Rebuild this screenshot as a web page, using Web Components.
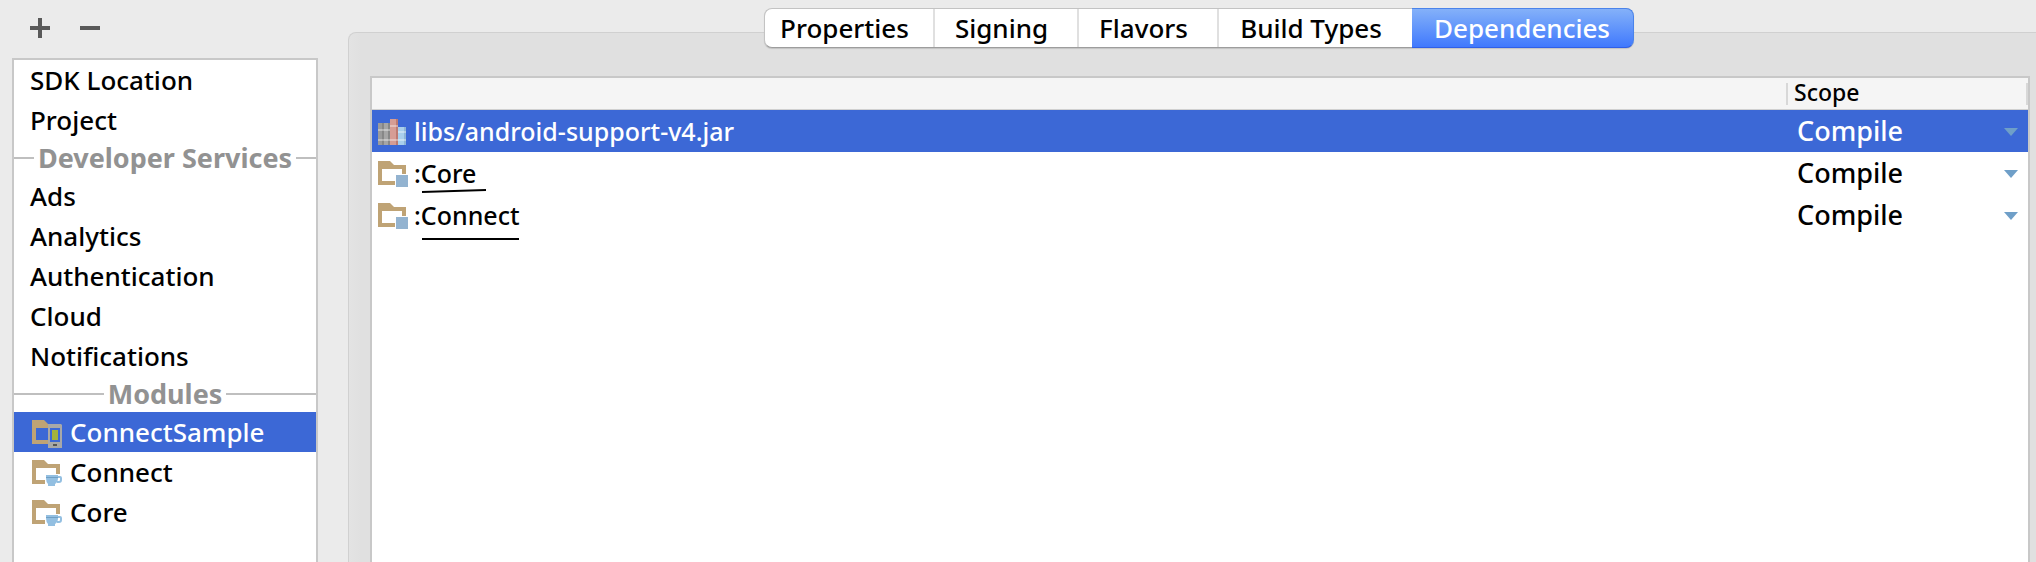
<!DOCTYPE html>
<html lang="en">
<head>
<meta charset="utf-8">
<meta name="viewport" content="width=device-width, initial-scale=1">
<title>Project Structure</title>
<style>
  body { margin: 0; font: 500 26px/40px "Noto Sans", "Open Sans", sans-serif; color: #000; background: #ebebeb; }
</style>
</head>
<body>
<project-structure>
  <module-toolbar slot="toolbar"></module-toolbar>
  <section-list slot="list">
    <list-item>SDK Location</list-item>
    <list-item>Project</list-item>
    <list-heading>Developer Services</list-heading>
    <list-item>Ads</list-item>
    <list-item>Analytics</list-item>
    <list-item>Authentication</list-item>
    <list-item>Cloud</list-item>
    <list-item>Notifications</list-item>
    <list-heading>Modules</list-heading>
    <list-item selected><folder-icon slot="icon" kind="phone"></folder-icon>ConnectSample</list-item>
    <list-item><folder-icon slot="icon" kind="cup"></folder-icon>Connect</list-item>
    <list-item><folder-icon slot="icon" kind="cup"></folder-icon>Core</list-item>
  </section-list>
  <tab-strip slot="tabs"></tab-strip>
  <dependency-table slot="content"></dependency-table>
</project-structure>

<script>
class ShadowElement extends HTMLElement {
  constructor() {
    super();
    this.attachShadow({ mode: 'open' });
  }
  connectedCallback() {
    this.shadowRoot.innerHTML = this.render();
  }
}

customElements.define('project-structure', class extends ShadowElement {
  render() {
    return `
      <style>
        :host { display: flex; min-height: 100vh; overflow: hidden; }
        aside { flex: none; width: 306px; margin: 0 30px 0 12px; display: flex; flex-direction: column; }
        .list { flex: 1; display: flex; }
        main { flex: 1; min-width: 0; margin-right: -13px; display: flex; flex-direction: column; position: relative; padding-top: 8px; }
        .tabs { display: flex; justify-content: center; position: relative; z-index: 1; margin-bottom: -16px; }
        .panel { flex: 1; display: flex; border: 1px solid #d0d0d0; border-bottom: 0; border-radius: 8px 8px 0 0; padding: 43px 18px 0 21px;
          background: linear-gradient(90deg, #e3e3e3, #e0e0e0 12px); }
      </style>
      <aside>
        <slot name="toolbar"></slot>
        <div class="list"><slot name="list"></slot></div>
      </aside>
      <main>
        <div class="tabs"><slot name="tabs"></slot></div>
        <div class="panel"><slot name="content"></slot></div>
      </main>`;
  }
});

customElements.define('module-toolbar', class extends ShadowElement {
  render() {
    return `
      <style>
        :host { display: flex; gap: 30px; padding: 18px; height: 22px; }
        button { border: 0; padding: 0; background: none; width: 20px; height: 20px; }
        svg { display: block; }
      </style>
      <button type="button" aria-label="Add module"><svg width="20" height="20" fill="#595959"><path d="M8 0h4v8h8v4h-8v8H8v-8H0V8h8z"/></svg></button>
      <button type="button" aria-label="Remove module"><svg width="20" height="20" fill="#595959"><path d="M0 8h20v4H0z"/></svg></button>`;
  }
});

customElements.define('section-list', class extends ShadowElement {
  render() {
    return `
      <style>
        :host { display: block; flex: 1; background: #fff; border: 2px solid #c8c8c8; border-bottom: 0; }
      </style>
      <nav aria-label="Sections"><slot></slot></nav>`;
  }
});

customElements.define('list-item', class extends ShadowElement {
  render() {
    return `
      <style>
        :host { display: block; }
        a { display: flex; align-items: center; gap: 8px; height: 40px; padding-left: 16px; color: inherit; text-decoration: none; white-space: nowrap; }
        :host([selected]) { background: #3c68d6; color: #fff; }
        ::slotted(folder-icon) { margin: 4px 0 0 2px; }
      </style>
      <a href="#"><slot name="icon"></slot><span><slot></slot></span></a>`;
  }
});

customElements.define('list-heading', class extends ShadowElement {
  render() {
    return `
      <style>
        :host { display: flex; align-items: center; gap: 4px; height: 36px; font-size: 27px; line-height: 36px; font-weight: bold; color: #929292; white-space: nowrap; }
        :host::before, :host::after { content: ""; flex: 1; height: 2px; background: #bfbfbf; }
      </style>
      <slot></slot>`;
  }
});

const FOLDER = '<path d="M0 0h12l4 4h12v20H0zM4 8v12h20V8z" fill="#bfa375" fill-rule="evenodd"/>';
const ICONS = {
  phone: FOLDER + `
    <path d="M16 4h13l1 1v23H16z" fill="#a8a8a8"/><path d="M18 8h10v14H18z" fill="#3c68d6"/>
    <path d="M20 10h6v10h-6z" fill="#a3b23c"/><path d="M21 24h4v2h-4z" fill="#555"/>`,
  cup: FOLDER + `
    <path d="M13 14h15v10h-15z" fill="#fff"/><path d="M14 15h12v3q0 4-3 6v2h-7v-2q-2-2-2-6z" fill="#93bfe1"/>
    <path d="M14 17h12v1H14z" fill="#6f9fc4"/><path d="M26 17h2q1 0 1 1v2q0 2-2 2h-2" fill="none" stroke="#93bfe1" stroke-width="2"/>`,
  module: FOLDER + `
    <path d="M17 13h11v11H17z" fill="#fff"/><path d="M18 14h12v12H18z" fill="#93b3d0"/>`,
  library: `
    <path d="M0 4h6v22H0z" fill="#9b9b9b"/><path d="M6 4h6v22H6z" fill="#a6a6a6"/>
    <path d="M4 4h2v22H4zM10 4h2v22h-2z" fill="#878787"/><path d="M12 0h8v26h-8z" fill="#d69d95"/>
    <path d="M18 0h2v26h-2z" fill="#bd7a72"/><path d="M20 8h8v18h-8z" fill="#a9cfec"/><path d="M26 8h2v18h-2z" fill="#8fb5d5"/>
    <path d="M0 10h12v2H0zM0 20h12v2H0zM12 6h8v2h-8zM12 20h8v2h-8zM20 12h8v2h-8zM20 20h8v2h-8z" fill="#fff" opacity=".35"/>`
};

customElements.define('folder-icon', class extends ShadowElement {
  render() {
    return `
      <style>:host { display: block; flex: none; } svg { display: block; }</style>
      <svg width="30" height="28" aria-hidden="true">${ICONS[this.getAttribute('kind')]}</svg>`;
  }
});

customElements.define('tab-strip', class extends ShadowElement {
  render() {
    const tabs = ['Properties', 'Signing', 'Flavors', 'Build Types', 'Dependencies'];
    return `
      <style>
        :host { display: block; }
        div { display: grid; grid-template-columns: 170px 144px 140px 193px 222px; height: 38px; border: solid #c3c3c3; border-width: 1px 0 1px 1px; border-bottom-color: #9d9d9d; border-radius: 8px;
          background: #fff; box-shadow: 0 1px 1px #0002; }
        button { font: inherit; line-height: 36px; color: inherit; background: none; border: 0; border-right: 2px solid #e0e0e0; padding: 0 8px 0 0; white-space: nowrap; }
        button:nth-child(4) { border-right: 0; }
        button[aria-selected=true] { margin: -1px 0; padding: 0; border: 1px solid #4a83ea; border-width: 1px 1px 1px 0; border-bottom-color: #2f5fe8; border-radius: 0 8px 8px 0; color: #fff;
          background: linear-gradient(#84b1f9, #4079fd); }
      </style>
      <div role="tablist">${tabs.map((t, i) => `<button type="button" role="tab" aria-selected="${i === 4}">${t}</button>`).join('')}</div>`;
  }
});

customElements.define('scope-select', class extends ShadowElement {
  render() {
    return `
      <style>
        :host { display: grid; align-items: center; font-size: 27px; }
        select, svg { grid-area: 1 / 1; }
        select { appearance: none; width: 100%; height: 40px; border: 0; margin: 0; padding: 0 0 0 11px; background: none; font: inherit; color: inherit; }
        svg { justify-self: end; margin: 2px 10px 0 0; pointer-events: none; }
      </style>
      <select aria-label="Scope of ${this.getAttribute('for-name')}"><option>Compile</option></select>
      <svg width="14" height="8" aria-hidden="true"><path d="M0 0h14L7 8z" fill="#6f9fc8"/></svg>`;
  }
});

customElements.define('dependency-table', class extends ShadowElement {
  render() {
    const rows = [
      { name: 'libs/android-support-v4.jar', icon: 'library', selected: true },
      { name: ':Core', icon: 'module', mark: '<svg class="mark" width="64" height="4"><path d="M0 3 64 1" stroke="#000" stroke-width="2"/></svg>' },
      { name: ':Connect', icon: 'module', mark: '<svg class="mark low" width="97" height="4"><path d="M0 2H97" stroke="#000" stroke-width="2"/></svg>' }
    ];
    return `
      <style>
        :host { display: block; flex: 1; background: #fff; border: 2px solid #c8c8c8; border-bottom: 0; }
        table { width: 100%; border-collapse: separate; border-spacing: 0; table-layout: fixed; }
        th, td { padding: 0; font-weight: inherit; text-align: left; }
        th { height: 31px; background: #f5f5f5; font-size: 23px; border-bottom: 1px solid #d0d0d0; }
        th:last-child { width: 242px; }
        th span { display: block; height: 22px; line-height: 18px; padding-left: 6px; border: solid #d8d8d8; border-width: 0 2px; }
        td { height: 42px; }
        tr.selected { background: #3c68d6; color: #fff; }
        .name { position: relative; display: flex; align-items: center; gap: 6px; padding-left: 6px; font-size: 25px; }
        .name folder-icon { margin-top: 4px; }
        .mark { position: absolute; left: 50px; top: 36px; }
        .low { top: 42px; }
      </style>
      <table>
        <thead><tr><th></th><th scope="col"><span>Scope</span></th></tr></thead>
        <tbody>${rows.map(r => `
          <tr class="${r.selected ? 'selected' : ''}">
            <td><div class="name"><folder-icon kind="${r.icon}"></folder-icon><span>${r.name}</span>${r.mark || ''}</div></td>
            <td><scope-select for-name="${r.name}"></scope-select></td>
          </tr>`).join('')}
        </tbody>
      </table>`;
  }
});
</script>
</body>
</html>
